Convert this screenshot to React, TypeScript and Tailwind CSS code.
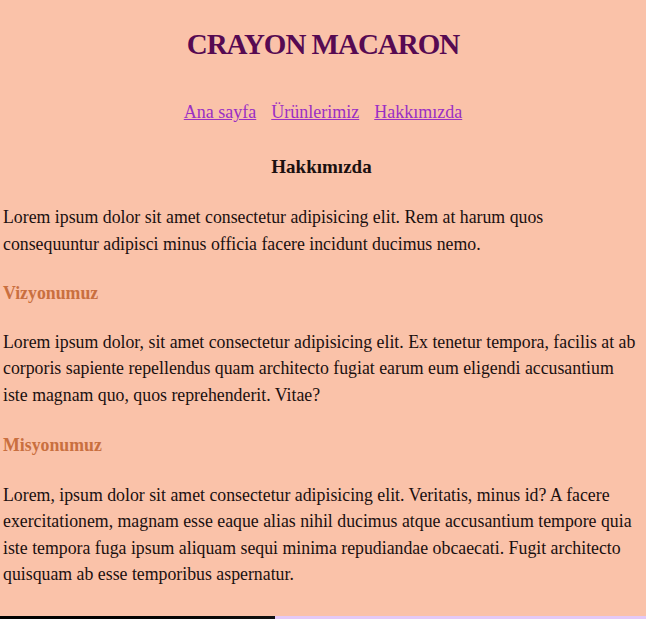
import React from 'react';

const links = ['Ana sayfa', 'Ürünlerimiz', 'Hakkımızda'];

const App: React.FC = () => {
  return (
    <div className="min-h-screen bg-[#fac2a9] text-[#1a1010] font-['Liberation_Serif',serif]">
      {/* Header */}
      <header className="pt-[24px] text-center">
        <h1 className="text-[29px] leading-[40px] font-bold tracking-[-1px] text-[#560a52]">CRAYON MACARON</h1>
        <nav className="mt-[36px] flex justify-center gap-[15px] text-[18px] leading-[24px]">
          {links.map((l) => (
            <a key={l} href="#" className="text-[#9a2fc4] underline">
              {l}
            </a>
          ))}
        </nav>
      </header>

      {/* Content */}
      <main className="pl-[3px] pr-[6px] pt-[31px] text-[17.8px] leading-[26.5px]">
        <h2 className="text-center text-[19px] font-bold leading-[24px]">Hakkımızda</h2>
        <p className="mt-[25px]">
          Lorem ipsum dolor sit amet consectetur adipisicing elit. Rem at harum quos consequuntur adipisci minus
          officia facere incidunt ducimus nemo.
        </p>
        <h3 className="mt-[23px] font-bold text-[#c96f3f]">Vizyonumuz</h3>
        <p className="mt-[22px]">
          Lorem ipsum dolor, sit amet consectetur adipisicing elit. Ex tenetur tempora, facilis at ab corporis
          sapiente repellendus quam architecto fugiat earum eum eligendi accusantium iste magnam quo, quos
          reprehenderit. Vitae?
        </p>
        <h3 className="mt-[24px] font-bold text-[#c96f3f]">Misyonumuz</h3>
        <p className="mt-[23px]">
          Lorem, ipsum dolor sit amet consectetur adipisicing elit. Veritatis, minus id? A facere exercitationem,
          magnam esse eaque alias nihil ducimus atque accusantium tempore quia iste tempora fuga ipsum aliquam sequi
          minima repudiandae obcaecati. Fugit architecto quisquam ab esse temporibus aspernatur.
        </p>
      </main>

      {/* Footer */}
      <footer className="mt-[28px] flex h-[60px]">
        <div className="w-[275px] bg-gradient-to-r from-black to-[#111]"></div>
        <div className="flex-1 bg-[#e3c9f7]"></div>
      </footer>
    </div>
  );
};

export default App;
